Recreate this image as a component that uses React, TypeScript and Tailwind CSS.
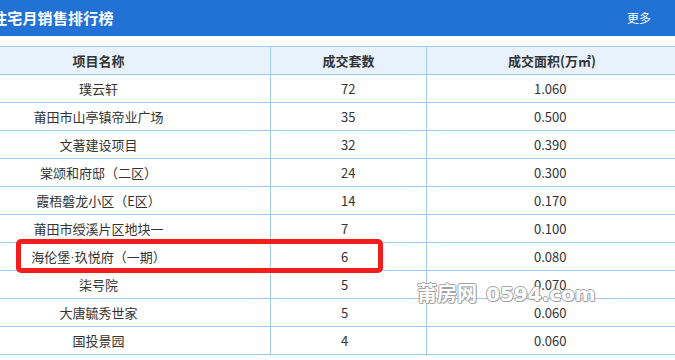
import React from "react";

type Row = { name: React.ReactNode; count: string; area: string };

const rows: Row[] = [
  { name: "璞云轩", count: "72", area: "1.060" },
  { name: "莆田市山亭镇帝业广场", count: "35", area: "0.500" },
  { name: "文著建设项目", count: "32", area: "0.390" },
  { name: "棠颂和府邸（二区）", count: "24", area: "0.300" },
  { name: "霞梧磐龙小区（E区）", count: "14", area: "0.170" },
  { name: "莆田市绶溪片区地块一", count: "7", area: "0.100" },
  {
    name: (
      <>
        海伦堡
        <span style={{ fontFamily: '"Liberation Sans", sans-serif' }}>·</span>
        玖悦府（一期）
      </>
    ),
    count: "6",
    area: "0.080",
  },
  { name: "柒号院", count: "5", area: "0.070" },
  { name: "大唐毓秀世家", count: "5", area: "0.060" },
  { name: "国投景园", count: "4", area: "0.060" },
];

const font = { fontFamily: '"Noto Sans CJK SC", "Noto Sans", sans-serif' };

export default function App() {
  return (
    <div
      className="relative w-[675px] h-[360px] overflow-hidden bg-white text-[#333]"
      style={font}
    >
      {/* title bar */}
      <div className="h-[36px] bg-[#2272d6] flex items-center justify-between">
        <span className="-ml-[8px] text-[15px] font-bold text-white tracking-[0.2px]">
          住宅月销售排行榜
        </span>
        <span className="mr-[24px] text-[12px] text-white">更多</span>
      </div>

      {/* table */}
      <div className="mt-[10px] -ml-[73px] w-[760px]">
        <div className="grid grid-cols-[344px_156px_1fr] h-[29px] bg-[#e8f2fc] border-y border-[#9fcbf6] text-[13px] font-bold text-[#333]">
          <div className="flex items-center justify-center border-r border-[#9fcbf6]">项目名称</div>
          <div className="flex items-center justify-center border-r border-[#9fcbf6]">成交套数</div>
          <div className="flex items-center pl-[81px]">成交面积(万㎡)</div>
        </div>
        {rows.map((r, i) => (
          <div
            key={i}
            className="grid grid-cols-[344px_156px_1fr] h-[28px] border-b border-[#9fcbf6] text-[13px]"
          >
            <div className="flex items-center justify-center border-r border-[#9fcbf6]">{r.name}</div>
            <div className="flex items-center pl-[70px] border-r border-[#9fcbf6]">{r.count}</div>
            <div className="flex items-center pl-[107px]">{r.area}</div>
          </div>
        ))}
      </div>

      {/* highlight box */}
      <div className="absolute left-[16px] top-[239px] w-[367px] h-[34px] border-[5px] border-[#f21d1d] rounded-[5px]" />

      {/* watermark */}
      <div
        className="absolute left-[417px] top-[278px] flex items-baseline gap-[9px] text-white opacity-90 pointer-events-none"
        style={{
          textShadow:
            "1px 0 #9a9a9a, -1px 0 #9a9a9a, 0 1px #9a9a9a, 0 -1px #9a9a9a, 1px 1px #b0b0b0",
        }}
      >
        <span className="text-[20px] font-bold">莆房网</span>
        <span className="text-[20px] font-bold" style={{ fontFamily: '"DejaVu Sans", sans-serif' }}>
          0594.com
        </span>
      </div>
    </div>
  );
}
